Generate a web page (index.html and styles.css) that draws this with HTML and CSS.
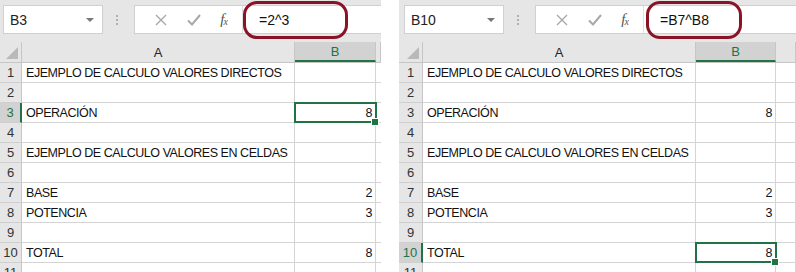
FILE: index.html
```html
<!DOCTYPE html>
<html lang="es">
<head>
    <meta charset="UTF-8">
    <title>Calculo de potencias</title>
    <link rel="stylesheet" href="styles.css">
</head>
<body>
<div class="screens">

    <!-- Captura izquierda: valores directos -->
    <div class="sheet sheet-left">
        <div class="bar">
            <div class="namebox"><span>B3</span><i class="caret"></i></div>
            <div class="grip"><i></i><i></i><i></i></div>
            <div class="formula">
                <div class="tools">
                    <svg class="ico" width="14" height="14" viewBox="0 0 14 14"><path d="M2 2 L12 12 M12 2 L2 12" stroke="#a8a8a8" stroke-width="1.4" fill="none"/></svg>
                    <svg class="ico" width="16" height="14" viewBox="0 0 16 14"><path d="M2 7.5 L6 11.5 L14 2" stroke="#a8a8a8" stroke-width="2" fill="none"/></svg>
                    <span class="fx">f<sub>x</sub></span>
                </div>
                <div class="input">=2^3</div>
            </div>
            <div class="mark"></div>
        </div>
        <div class="grid">
            <div class="row head"><div class="corner"><i></i></div><div class="ch">A</div><div class="ch on">B</div><div class="ch"></div></div>
            <div class="row"><div class="rh">1</div><div class="c">EJEMPLO DE CALCULO VALORES DIRECTOS</div><div class="c"></div><div class="c"></div></div>
            <div class="row"><div class="rh">2</div><div class="c"></div><div class="c"></div><div class="c"></div></div>
            <div class="row"><div class="rh on">3</div><div class="c">OPERACIÓN</div><div class="c num sel">8</div><div class="c"></div></div>
            <div class="row"><div class="rh">4</div><div class="c"></div><div class="c"></div><div class="c"></div></div>
            <div class="row"><div class="rh">5</div><div class="c">EJEMPLO DE CALCULO VALORES EN CELDAS</div><div class="c"></div><div class="c"></div></div>
            <div class="row"><div class="rh">6</div><div class="c"></div><div class="c"></div><div class="c"></div></div>
            <div class="row"><div class="rh">7</div><div class="c">BASE</div><div class="c num">2</div><div class="c"></div></div>
            <div class="row"><div class="rh">8</div><div class="c">POTENCIA</div><div class="c num">3</div><div class="c"></div></div>
            <div class="row"><div class="rh">9</div><div class="c"></div><div class="c"></div><div class="c"></div></div>
            <div class="row"><div class="rh">10</div><div class="c">TOTAL</div><div class="c num">8</div><div class="c"></div></div>
            <div class="row"><div class="rh">11</div><div class="c"></div><div class="c"></div><div class="c"></div></div>
        </div>
    </div>

    <!-- Captura derecha: valores en celdas -->
    <div class="sheet sheet-right">
        <div class="bar">
            <div class="namebox"><span>B10</span><i class="caret"></i></div>
            <div class="grip"><i></i><i></i><i></i></div>
            <div class="formula">
                <div class="tools">
                    <svg class="ico" width="14" height="14" viewBox="0 0 14 14"><path d="M2 2 L12 12 M12 2 L2 12" stroke="#a8a8a8" stroke-width="1.4" fill="none"/></svg>
                    <svg class="ico" width="16" height="14" viewBox="0 0 16 14"><path d="M2 7.5 L6 11.5 L14 2" stroke="#a8a8a8" stroke-width="2" fill="none"/></svg>
                    <span class="fx">f<sub>x</sub></span>
                </div>
                <div class="input">=B7^B8</div>
            </div>
            <div class="mark"></div>
        </div>
        <div class="grid">
            <div class="row head"><div class="corner"><i></i></div><div class="ch">A</div><div class="ch on">B</div><div class="ch"></div></div>
            <div class="row"><div class="rh">1</div><div class="c">EJEMPLO DE CALCULO VALORES DIRECTOS</div><div class="c"></div><div class="c"></div></div>
            <div class="row"><div class="rh">2</div><div class="c"></div><div class="c"></div><div class="c"></div></div>
            <div class="row"><div class="rh">3</div><div class="c">OPERACIÓN</div><div class="c num">8</div><div class="c"></div></div>
            <div class="row"><div class="rh">4</div><div class="c"></div><div class="c"></div><div class="c"></div></div>
            <div class="row"><div class="rh">5</div><div class="c">EJEMPLO DE CALCULO VALORES EN CELDAS</div><div class="c"></div><div class="c"></div></div>
            <div class="row"><div class="rh">6</div><div class="c"></div><div class="c"></div><div class="c"></div></div>
            <div class="row"><div class="rh">7</div><div class="c">BASE</div><div class="c num">2</div><div class="c"></div></div>
            <div class="row"><div class="rh">8</div><div class="c">POTENCIA</div><div class="c num">3</div><div class="c"></div></div>
            <div class="row"><div class="rh">9</div><div class="c"></div><div class="c"></div><div class="c"></div></div>
            <div class="row"><div class="rh on">10</div><div class="c">TOTAL</div><div class="c num sel">8</div><div class="c"></div></div>
            <div class="row"><div class="rh">11</div><div class="c"></div><div class="c"></div><div class="c"></div></div>
        </div>
    </div>

</div>
</body>
</html>
```

FILE: styles.css
```css
/* General */
* {
    margin: 0;
    padding: 0;
    box-sizing: border-box;
}

body {
    background: #ffffff;
    font-family: 'Liberation Sans', Arial, sans-serif;
    color: #000;
    overflow: hidden;
    height: 272px;
}

.screens {
    display: flex;
    gap: 18px;
}

.sheet {
    position: relative;
    height: 272px;
    overflow: hidden;
    background: #ffffff;
}

.sheet-left {
    width: 381px;
    --cols: 22px 273px 81px 1fr;
}

.sheet-right {
    width: 397px;
    --cols: 24px 273px 80px 1fr;
}

/* Formula bar */
.bar {
    height: 42px;
    background: #e6e6e6;
    display: flex;
    align-items: flex-start;
    padding-top: 5px;
    padding-left: 3px;
}

.sheet-right .bar {
    padding-left: 5px;
}

.namebox {
    width: 100px;
    height: 29px;
    background: #fff;
    border: 1px solid #d0d0d0;
    display: flex;
    align-items: center;
    justify-content: space-between;
    padding: 0 6px 0 6px;
    font-size: 14px;
    color: #222;
}

.caret {
    width: 0;
    height: 0;
    border-left: 4px solid transparent;
    border-right: 4px solid transparent;
    border-top: 4px solid #777;
    margin-right: 2px;
}

.grip {
    width: 31px;
    height: 29px;
    display: flex;
    flex-direction: column;
    align-items: center;
    justify-content: center;
    gap: 2px;
    padding-right: 3px;
}

.grip i {
    width: 2px;
    height: 2px;
    background: #b0b0b0;
}

.formula {
    flex: 1;
    height: 29px;
    background: #fff;
    border: 1px solid #d0d0d0;
    border-right: none;
    display: flex;
    align-items: center;
}

.tools {
    width: 108px;
    height: 100%;
    display: flex;
    align-items: center;
    justify-content: space-around;
    padding: 0 6px 0 10px;
    border-right: 1px solid #e0e0e0;
}

.fx {
    font-family: 'Liberation Serif', serif;
    font-style: italic;
    font-size: 15px;
    color: #555;
    letter-spacing: -1px;
}

.fx sub {
    font-size: 10px;
    vertical-align: -1px;
}

.input {
    padding-left: 16px;
    font-size: 14px;
    color: #111;
}

/* red annotation around the formula */
.mark {
    position: absolute;
    top: 1px;
    height: 38px;
    border: 3px solid #8a1426;
    border-radius: 14px;
}

.sheet-left .mark {
    left: 243px;
    width: 105px;
}

.sheet-right .mark {
    left: 247px;
    width: 96px;
}

/* Grid */
.row {
    display: grid;
    grid-template-columns: var(--cols);
    height: 20px;
    border-bottom: 1px solid #d4d4d4;
}

.row.head {
    height: 21px;
    background: #e6e6e6;
    border-bottom: 1px solid #c6c6c6;
}

.corner {
    position: relative;
    border-right: 1px solid #c6c6c6;
}

.corner i {
    position: absolute;
    right: 3px;
    bottom: 3px;
    width: 0;
    height: 0;
    border-left: 12px solid transparent;
    border-bottom: 12px solid #b9b9b9;
}

.ch {
    font-size: 13px;
    color: #222;
    display: flex;
    align-items: center;
    justify-content: center;
    border-right: 1px solid #c6c6c6;
}

.ch.on {
    background: #d2d2d2;
    color: #217346;
    border-bottom: 2px solid #217346;
    padding-top: 1px;
}

.rh {
    background: #e6e6e6;
    font-size: 13px;
    color: #333;
    display: flex;
    align-items: center;
    justify-content: center;
    border-right: 1px solid #c6c6c6;
    margin-bottom: -1px;
    border-bottom: 1px solid #cfcfcf;
}

.rh.on {
    background: #d2d2d2;
    color: #217346;
    border-right: 2px solid #217346;
}

.c {
    font-size: 12.5px;
    letter-spacing: -0.45px;
    white-space: nowrap;
    display: flex;
    align-items: center;
    padding: 1px 3px 0 4px;
    border-right: 1px solid #d4d4d4;
    color: #111;
}

.num {
    justify-content: flex-end;
}

.sel {
    position: relative;
    outline: 2px solid #217346;
    outline-offset: -1px;
    z-index: 2;
}

.sel::after {
    content: '';
    position: absolute;
    right: -4px;
    bottom: -4px;
    width: 6px;
    height: 6px;
    background: #217346;
    border: 1px solid #fff;
}
```
